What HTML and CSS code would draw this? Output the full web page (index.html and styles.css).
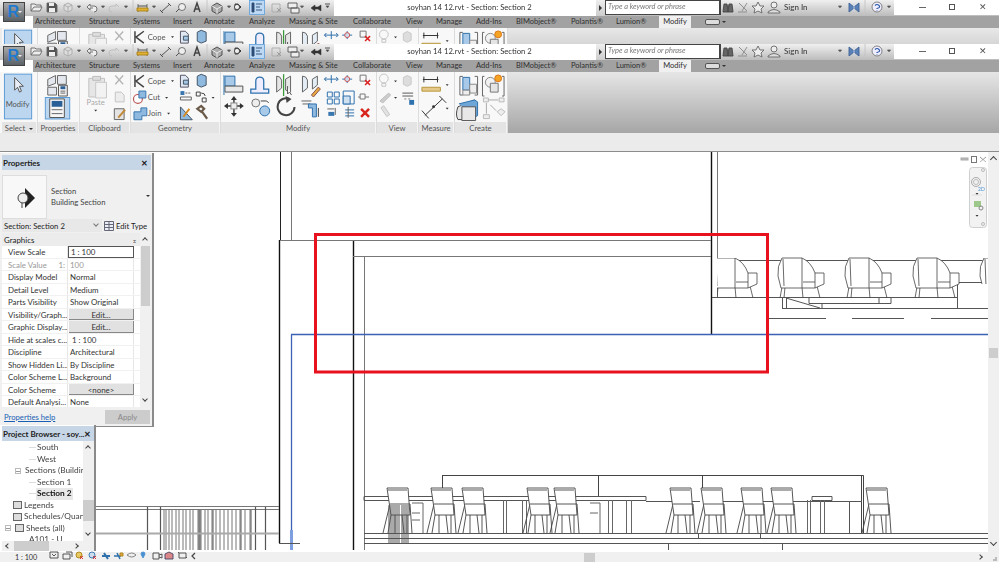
FILE: index.html
```html
<!DOCTYPE html>
<html lang="en">
<head>
<meta charset="utf-8">
<title>soyhan 14 12.rvt - Section: Section 2</title>
<link rel="stylesheet" href="styles.css">
</head>
<body>
<svg class="defs" width="0" height="0" aria-hidden="true">
<defs>
  <g id="caret"><path d="M-1.5 0h3L0 1.8z" fill="#333"/></g>
  <g id="qat" fill="none" stroke="#666" stroke-width=".9">
    <path d="M31 11V4h4l1 1h5v2M31 11l3-4h8l-2 4z" fill="#ededed"/>
    <path d="M47 3h8l2 2v7H47z" fill="#555"/><path d="M49 3h5v3h-5zM49 8h6v4h-6z" fill="#eee" stroke="none"/>
    <path d="M64 5l4-2 4 2v5l-4 2-4-2z" fill="#ddd" stroke="#aaa"/><path d="M68 7v5M64 5l4 2 4-2" stroke="#aaa"/>
    <use href="#caret" x="79" y="6"/>
    <path d="M87 7l3-3v2h4q3 0 3 3t-3 3M87 7l3 3V8h3" fill="#eee"/>
    <use href="#caret" x="103" y="6"/>
    <path d="M119 7l-3-3v2h-4q-3 0-3 3t3 3" stroke="#bbb"/>
    <use href="#caret" x="126" y="6"/>
    <path d="M133 0v15M207 0v15M264 0v15" stroke="#c4c4c4"/>
    <path d="M138 4v8M147 4v8"/><path d="M137 8h11v3h-11z" fill="#e0b030" stroke="#a98218"/><path d="M138 6h9" stroke="#444"/>
    <use href="#caret" x="154" y="6"/>
    <path d="M161 12l9-8M160 10l3 3M168 3l3 3" stroke="#444"/>
    <circle cx="182" cy="7" r="3.500" fill="#eee"/><path d="M176 12l3-3" stroke="#444"/>
    <path d="M194 12l3-9 3 9M195 9h4" stroke="#444" stroke-width="1.500"/>
    <path d="M212 6l5-3 5 3v5l-5 3-5-3z" fill="#aaa" stroke="#444"/><path d="M212 6l5 3 5-3M217 9v5" stroke="#eee"/>
    <use href="#caret" x="229" y="6"/>
    <path d="M235 4h3l3 3-3 3h-3z" fill="#333" stroke="#333"/><circle cx="237" cy="7" r="2.600" fill="#eee" stroke="#444"/>
    <rect x="249.500" y=".5" width="15" height="14" fill="#bcd8f3" stroke="#6aa5dc"/>
    <path d="M252 3h2v9h-2zM256 4h6M256 7h4M256 10h6" stroke="#2c4c76" fill="#2c4c76"/>
    <path d="M272 4h8v8h-8z" stroke="#aaa"/><path d="M277 8l4 4M281 8l-4 4" stroke="#999"/>
    <path d="M288 3h9v5h-9zM291 8h8v5h-8z" fill="#eee" stroke="#555"/>
    <use href="#caret" x="302" y="6"/>
    <path d="M311 8l4-3v2h3l3-2v6l-3-2h-3v2z" fill="#333" stroke="#333" stroke-width=".5"/>
    <path d="M325 4h5" stroke="#444"/><use href="#caret" x="327.500" y="6"/>
  </g>
  <g id="qat-right" fill="none" stroke="#666" stroke-width=".9">
    <path d="M723 4h3l1 8h-5zM728 4h3l1 8h-5zM726 6h2" fill="#666" stroke="#444"/>
    <path d="M738 3l8 8M746 3l-5 8M737 12h9" stroke="#888"/>
    <path d="M757 2l2 4h4l-3 3 1 4-4-2-4 2 1-4-3-3h4z" fill="#eee"/>
    <circle cx="773" cy="5" r="3" fill="#eee"/><path d="M767 12q6-5 12 0v1h-12z" fill="#ddd"/>
    <use href="#caret" x="839" y="6"/>
    <path d="M848 3l5 4 5-4v9l-5-4-5 4z" fill="#5a80b8" stroke="#3d6296"/><path d="M853 3v9" stroke="#c9d6ea"/>
    <path d="M864 0v15" stroke="#c4c4c4"/>
    <circle cx="876" cy="7" r="5" fill="#eef" stroke="#777"/><path d="M874 5.500q2-2 4 0t-2 3v.5M876 10.500v.5" stroke="#2c58a8" stroke-width="1.100"/>
    <use href="#caret" x="888" y="6"/>
  </g>
  <g id="p-select">
    <rect x="4.500" y="1.500" width="28" height="46" fill="#bcd6f0" stroke="#5b9bd5"/>
    <path d="M15 5v13l3-3 2 5 2-1-2-5h4z" fill="#e8eef5" stroke="#555"/>
    <text x="18" y="35" class="t" text-anchor="middle">Modify</text>
  </g>
  <g id="p-props" fill="none">
    <path d="M48 7l8-4v8l-8 3zM58 3h9v9h-9zM48 15h9v8h-9z" fill="#e4e8ee" stroke="#666"/>
    <path d="M59 13h9v11h-9z" fill="#f4f4f4" stroke="#555"/><path d="M61 14h5v3h-5z" fill="#2a5f98"/><path d="M61 19h5M61 21h5" stroke="#666"/>
    <rect x="45.500" y="25.500" width="25" height="22" fill="#bcd6f0" stroke="#5b9bd5"/>
    <path d="M50 27h15v19H50z" fill="#f6f6f6" stroke="#555"/><path d="M52 29h11v6H52z" fill="#2a5f98"/>
    <path d="M52 38h11M52 42h11" stroke="#666"/>
  </g>
  <g id="p-clip" fill="none">
    <path d="M89 6h16v19H89z" fill="#e6e6e6" stroke="#c2c2c2"/><path d="M93 4h8v4h-8z" fill="#ddd" stroke="#bbb"/><path d="M96 10h11v16H96z" fill="#f2f2f2" stroke="#c8c8c8"/>
    <text x="96" y="33" class="t dim" text-anchor="middle">Paste</text>
    <use href="#caret" x="96" y="38"/>
    <path d="M116 3l8 9M124 3l-8 9" stroke="#b5b5b5" stroke-width="1.400"/>
    <path d="M116 20h6l3 3v7h-9z" fill="#ededed" stroke="#c4c4c4"/>
    <path d="M115 37h10v11h-10z" fill="#e3e3e3" stroke="#666"/><path d="M119 46l7-8" stroke="#c28a3a" stroke-width="2"/>
  </g>
  <g id="p-geom" fill="none">
    <path d="M135 3v12M136 9l8-6M136 9l8 6" stroke="#444" stroke-width="1.500"/>
    <text x="148" y="12" class="t">Cope</text><use href="#caret" x="173" y="8"/>
    <path d="M181 3h5l3 3v9h-8z" fill="#dfe8f2" stroke="#556"/><path d="M184 8h5v4h-5z" fill="#a4c7e6" stroke="#456"/>
    <path d="M198 4l4-2 5 2v9l-5 2-4-2z" fill="#8fb9df" stroke="#456"/>
    <circle cx="138" cy="27" r="4.500" fill="#fff" stroke="#b55" stroke-width="1.200"/><path d="M139 19h7v7h-7z" fill="#8fb9df" stroke="#3a77b0"/>
    <text x="148" y="28" class="t">Cut</text><use href="#caret" x="167" y="25"/>
    <path d="M181 19h4v4h-4z" fill="#3a77b0"/><path d="M181 25h11v3h-11z" stroke="#666"/><path d="M186 21h6" stroke="#666" stroke-dasharray="2 1"/>
    <path d="M197 20h4v4h-4zM203 26h4v4h-4z" stroke="#444"/><path d="M202 21q4 0 4 3" stroke="#444"/><use href="#caret" x="214" y="25"/>
    <path d="M134 40h7v-4h6v8h-5v4h-8z" fill="#8fb9df" stroke="#3a77b0"/>
    <text x="148" y="44" class="t">Join</text><use href="#caret" x="169" y="41"/>
    <path d="M181 35v13h12z" fill="#8fb9df" stroke="#456"/><path d="M184 45l6-8" stroke="#d88a20" stroke-width="2"/>
    <path d="M198 37l4-3 3 3-3 3zM203 40l5 7" stroke="#6a5a4a" stroke-width="2.200"/>
  </g>
  <g id="p-modify" fill="none">
    <path d="M225 4h10v10h-10z" fill="#a8cae8" stroke="#2f72ad"/><path d="M225 14h18v6h-18z" fill="#e8e8e8" stroke="#555"/><path d="M224 3v20" stroke="#2f72ad"/>
    <path d="M251 17h5v-8q0-4 4-4t4 4v8h5v4h-18z" fill="#eef" stroke="#2f72ad" stroke-width="1.300"/>
    <path d="M277 4q4 0 5 4v8l-5 4zM291 4l-5 3v11l5 2z" fill="#e6e6e6" stroke="#666"/><path d="M284 2v22" stroke="#3a9a3a" stroke-width="1.300"/><path d="M288 14v8l2-2 2 3" fill="#fff" stroke="#555"/>
    <path d="M303 4q4 0 5 4v8l-5 4zM318 4l-5 3v10l5-4z" fill="#e4edf6" stroke="#666"/><path d="M312 23l7-8 2 2-7 8z" fill="#e8a840" stroke="#855"/>
    <path d="M327 7h10M332 3v8" stroke="#2f72ad"/><path d="M327 5l-2 2 2 2M337 5l2 2-2 2" fill="#79b" stroke="#2f72ad"/>
    <path d="M343 7h10M348 3v8" stroke="#2f72ad"/><circle cx="348" cy="7" r="2.500" fill="#cde" stroke="#c55"/>
    <path d="M361 3h6v6h-6z" stroke="#777"/><path d="M366 8l5 5M371 8l-5 5" stroke="#d22" stroke-width="1.500"/>
    <path d="M328 20h5v5h-5zM335 20h5v5h-5zM328 27h5v5h-5zM335 27h5v5h-5z" stroke="#2f72ad"/>
    <path d="M344 19h11v13h-11z" stroke="#2f72ad"/><path d="M344 24h7v8h-7z" fill="#cfe0f0" stroke="#2f72ad"/>
    <path d="M361 22h5v5h-5zM366 25h4M361 25h-2" stroke="#777"/>
    <path d="M329 40h6v4h-6z" fill="#3a77b0"/><path d="M328 37h7M336 36v7" stroke="#666"/>
    <path d="M346 38h9M346 41h9M346 44h9" stroke="#2f72ad"/><path d="M349 35v11" stroke="#666"/>
    <path d="M362 37l8 8M370 37l-8 8" stroke="#d8261e" stroke-width="2.500"/>
    <path d="M234 26v16M226 34h16" stroke="#333" stroke-width="1.400"/>
    <path d="M234 24l-3 4h6zM234 45l-3-4h6zM224 34l4-3v6zM244 34l-4-3v6z" fill="#333"/><rect x="231" y="31" width="6" height="6" fill="#eee" stroke="#888"/>
    <circle cx="256" cy="31" r="4" fill="#eee" stroke="#777"/><circle cx="265" cy="39" r="5" fill="#a8cae8" stroke="#2f72ad"/><path d="M261 29h6l2 2" stroke="#444"/>
    <path d="M295 35a8.500 8.500 0 1 1-5-8" stroke="#444" stroke-width="2"/><path d="M286 24l6 3-5 4z" fill="#444"/>
    <path d="M302 29h10M303 32h8" stroke="#666"/><path d="M309 32h8v13h-4v-9h-4z" fill="#8fb9df" stroke="#2f72ad"/><path d="M319 36v9" stroke="#444"/>
  </g>
  <g id="p-view" fill="none">
    <circle cx="384" cy="6" r="4.500" stroke="#c4c4c4"/><path d="M382 11h4v3h-4z" stroke="#c4c4c4"/><use href="#caret" x="396" y="8"/>
    <path d="M404 5l4-2 4 2v7l-4 2-4-2z" fill="#ddd" stroke="#c8c8c8"/>
    <path d="M380 29l9-8 2 2-8 8z" fill="#ccc" stroke="#bbb"/><use href="#caret" x="396" y="25"/>
    <path d="M403 21h11M403 24h11" stroke="#555"/><path d="M405 27h2M409 27h2" stroke="#777"/><path d="M410 28h5v5h-5z" fill="#2f72ad"/>
    <path d="M381 36l6 9 3-2-6-9z" fill="#e2e2e2" stroke="#c4c4c4"/>
  </g>
  <g id="p-measure" fill="none">
    <path d="M423 7h16M424 4v6M438 4v6" stroke="#333"/><path d="M422 15h19v4h-19z" fill="#e6c98a" stroke="#b8963c"/>
    <use href="#caret" x="448" y="12"/>
    <path d="M425 44l18-17M422 39l7 8M440 24l7 7" stroke="#333"/><circle cx="434" cy="35" r="1.500" fill="#333"/>
    <use href="#caret" x="448" y="36"/>
  </g>
  <g id="p-create" fill="none">
    <path d="M460 4h3M460 4v19h3M478 4h-3M478 4v19h-3" stroke="#666"/>
    <path d="M463 5h7v13h-7z" fill="#a8cae8" stroke="#2f72ad"/><path d="M470 12h7v9h-7zM463 18h7v5h-7z" fill="#eee" stroke="#888"/>
    <path d="M485 4h-2v20h2M503 4h2v20h-2" stroke="#666"/>
    <circle cx="491" cy="10" r="5" fill="#f2f2f2" stroke="#888"/><path d="M491 11h8v9h-8z" fill="#e4e4e4" stroke="#777"/><circle cx="499" cy="6" r="3.500" fill="#f4a422" stroke="#d8761a"/>
    <path d="M458 35l17-7v14l-5 6h-12q-3-5 0-13z" fill="#e6e6e6" stroke="#444"/>
    <path d="M459 32l16-4 3 2v14l-4 2" fill="#6fa6d8" stroke="#2f72ad"/><path d="M462 35h14v14h-14z" fill="#e8e8e8" stroke="#555"/>
    <path d="M484 26h5v4h-5zM500 26h5v4h-5zM484 43h6v4h-6zM498 40l4-3 4 3-4 4z" stroke="#bbb" fill="#eee"/><path d="M489 28h10M487 31v11M491 33l6 6" stroke="#aaa"/>
  </g>
  <g id="dining" fill="#fff" stroke="#444" stroke-width=".9">
    <path d="M7 16L0 45M27 16l2 29M8 27L5 45M19 27l2 18M12 27v18M24 27v18" fill="none"/>
    <path d="M4 0h21l2 27H8z"/><path d="M5 2h19M7 16h20" fill="none"/>
  </g>
  <g id="lounge" fill="#fff" stroke="#444" stroke-width=".8">
    <path d="M5 29l-2 11M8 29l-1 11M25 29l1 11M40 28l3 12" fill="none"/>
    <path d="M5 0h20q9 4 13 15h9v11l-9 4H4L1 18Q0 8 5 0z"/>
    <path d="M6 1l1 27M25 0v30M26 24h12M38 15v15" fill="none"/>
  </g>
</defs>
</svg>

<div class="window">
  <div class="qat">
    <div class="rbtn"><span class="r">R</span><span class="rcaret"></span></div>
    <svg class="qat-icons" viewBox="27 0 305 15"><use href="#qat"/></svg>
    <div class="title">soyhan 14 12.rvt - Section: Section 2</div>
    <div class="search-btn"></div>
    <div class="search">Type a keyword or phrase</div>
    <div class="info">
      <svg class="info-icons" viewBox="720 0 173 15"><use href="#qat-right"/></svg>
      <span class="signin">Sign In</span>
    </div>
    <div class="winctl"><span class="min"></span><span class="max"></span><span class="close">✕</span></div>
  </div>
  <nav class="tabs">
    <span class="tab w54">Architecture</span><span class="tab w44">Structure</span><span class="tab w40">Systems</span><span class="tab w31">Insert</span><span class="tab w45">Annotate</span><span class="tab w40">Analyze</span><span class="tab w64">Massing &amp; Site</span><span class="tab w53">Collaborate</span><span class="tab w30">View</span><span class="tab w40">Manage</span><span class="tab w40">Add-Ins</span><span class="tab w55">BIMobject®</span><span class="tab w45">Polantis®</span><span class="tab w44">Lumion®</span><span class="tab on">Modify</span>
    <span class="tab-ext"></span><i class="ext-caret"></i>
  </nav>
  <div class="ribbon clip">
    <div class="panel wsel"><svg viewBox="2 0 36 50"><use href="#p-select"/></svg></div>
    <div class="panel wpro"><svg viewBox="38 0 42 50"><use href="#p-props"/></svg></div>
    <div class="panel wcli"><svg viewBox="80 0 51 50"><use href="#p-clip"/></svg></div>
    <div class="panel wgeo"><svg viewBox="131 0 90 50"><use href="#p-geom"/></svg></div>
    <div class="panel wmod"><svg viewBox="221 0 156 50"><use href="#p-modify"/></svg></div>
    <div class="panel wvie"><svg viewBox="377 0 42 50"><use href="#p-view"/></svg></div>
    <div class="panel wmea"><svg viewBox="419 0 36 50"><use href="#p-measure"/></svg></div>
    <div class="panel wcre"><svg viewBox="455 0 53 50"><use href="#p-create"/></svg></div>
    <div class="ribbon-fill"></div>
  </div>
</div>

<div class="window">
  <div class="qat">
    <div class="rbtn"><span class="r">R</span><span class="rcaret"></span></div>
    <svg class="qat-icons" viewBox="27 0 305 15"><use href="#qat"/></svg>
    <div class="title">soyhan 14 12.rvt - Section: Section 2</div>
    <div class="search-btn"></div>
    <div class="search">Type a keyword or phrase</div>
    <div class="info">
      <svg class="info-icons" viewBox="720 0 173 15"><use href="#qat-right"/></svg>
      <span class="signin">Sign In</span>
    </div>
    <div class="winctl"><span class="min"></span><span class="max"></span><span class="close">✕</span></div>
  </div>
  <nav class="tabs">
    <span class="tab w54">Architecture</span><span class="tab w44">Structure</span><span class="tab w40">Systems</span><span class="tab w31">Insert</span><span class="tab w45">Annotate</span><span class="tab w40">Analyze</span><span class="tab w64">Massing &amp; Site</span><span class="tab w53">Collaborate</span><span class="tab w30">View</span><span class="tab w40">Manage</span><span class="tab w40">Add-Ins</span><span class="tab w55">BIMobject®</span><span class="tab w45">Polantis®</span><span class="tab w44">Lumion®</span><span class="tab on">Modify</span>
    <span class="tab-ext"></span><i class="ext-caret"></i>
  </nav>
  <div class="ribbon">
    <div class="panel wsel"><svg viewBox="2 0 36 50"><use href="#p-select"/></svg><div class="plabel">Select <i class="dd"></i></div></div>
    <div class="panel wpro"><svg viewBox="38 0 42 50"><use href="#p-props"/></svg><div class="plabel">Properties</div></div>
    <div class="panel wcli"><svg viewBox="80 0 51 50"><use href="#p-clip"/></svg><div class="plabel">Clipboard</div></div>
    <div class="panel wgeo"><svg viewBox="131 0 90 50"><use href="#p-geom"/></svg><div class="plabel">Geometry</div></div>
    <div class="panel wmod"><svg viewBox="221 0 156 50"><use href="#p-modify"/></svg><div class="plabel">Modify</div></div>
    <div class="panel wvie"><svg viewBox="377 0 42 50"><use href="#p-view"/></svg><div class="plabel">View</div></div>
    <div class="panel wmea"><svg viewBox="419 0 36 50"><use href="#p-measure"/></svg><div class="plabel">Measure</div></div>
    <div class="panel wcre"><svg viewBox="455 0 53 50"><use href="#p-create"/></svg><div class="plabel">Create</div></div>
    <div class="ribbon-fill"></div>
  </div>
</div>
<div class="options-bar"></div>

<main class="workspace">
  <div class="view-row">
    <svg class="drawing" viewBox="0 152 988 398">
      <g fill="none" stroke="#555" stroke-width="1">
        <path d="M280.500 152V240" stroke="#222"/>
        <path d="M291.500 152V240M717.500 152V298" stroke="#777"/>
        <path d="M711.500 152V334M353.500 240V550M279.500 240V543" stroke="#111" stroke-width="1.400"/>
        <path d="M280 240.500H711M353 256.500H711" stroke="#777"/>
        <path d="M364.500 256V550" stroke="#777"/>
        <path d="M291.500 334.500V550M291 334.500H988" stroke="#3b62b5" stroke-width="1.300"/>
        <path d="M291.500 530V550" stroke="#7d9fe0" stroke-width="3"/>
        <path d="M279 543.500H300"/>
        <path d="M96 506.500H279M96 509.500H279" stroke="#777"/>
        <path d="M147.500 507V550M160.500 507V550M265.500 507V550M255.500 507V550" stroke="#555" stroke-width="1.200"/>
        <path d="M164 510V550M166 510V550M169 510V550M172 510V550M176 510V550M179 510V550M183 510V550M186 510V550M190 510V550M193 510V550M198 510V550M201 510V550M205 510V550M208 510V550M212 510V550M216 510V550M220 510V550M224 510V550M228 510V550M232 510V550M236 510V550M240 510V550M245 510V550M250 510V550" stroke="#777"/>
        <path d="M199 510V550M200 510V550M213 510V550M241 510V550M251 510V550" stroke="#555"/>
        <path d="M96 533.500H279" stroke="#aaa" stroke-width="2"/>
        <path d="M364 533.500H988M364 538.500H988M364 543.500H988" stroke="#555"/>
        <path d="M668.500 543V550M698.500 533V538M760.500 533V538M782.500 543V550"/>
        <path d="M442.500 475.500H863.500V533M861.500 475.500V533M442.500 475V496M598.500 475V496M702.500 475V496" stroke="#444"/>
        <path d="M364 496.500H646V500.500H364zM646 501.500H700M812 496.500H832V500.500H812zM720 501.500H862M849.500 501V533" stroke="#555"/>
        <path d="M503.500 500V533M506.500 500V533M522.500 500V533M526.500 500V533M608.500 500V533M612.500 500V533M626.500 500V533M631.500 500V533M807.500 500V533M810.500 500V533M820.500 500V533M824.500 500V533M412 503H423V533M412 513H420M412 520H420M590 503H600V533M590 513H598" stroke="#666"/>
      </g>
      <use href="#dining" x="383" y="488"/><use href="#dining" x="427" y="488"/><use href="#dining" x="458" y="488"/><use href="#dining" x="523" y="488"/><use href="#dining" x="550" y="488"/>
      <use href="#dining" x="666" y="488"/><use href="#dining" x="697" y="488"/><use href="#dining" x="737" y="488"/><use href="#dining" x="767" y="488"/><use href="#dining" x="862" y="488"/>
      <path d="M389 505V543M391 505V543M393 505V543M395 505V543M397 505V543M399 505V543M402 505V543M404 505V543M406 505V543M408 505V543" stroke="#555" fill="none"/>
      <g fill="none" stroke="#555">
        <path d="M717 260.500H988M712 297.500H957M782 308.500H988M957.500 282V308M957 282.500H988"/>
        <path d="M782.500 298V308M786.500 298V308M786 298L820 308M809 298V303.500H891V298M822 303V308M879 298V303"/>
        <path d="M766 318.500H826M852 318.500H904M931 318.500H988"/>
      </g>
      <svg x="717" y="258" width="45" height="42" viewBox="7 0 45 42"><use href="#lounge"/></svg>
      <use href="#lounge" x="777" y="258"/><use href="#lounge" x="844" y="258"/><use href="#lounge" x="912" y="258"/>
      <svg x="979" y="258" width="9" height="26"><use href="#lounge"/></svg>
      <path d="M315 234.500H767.500V372H315.500V233" fill="none" stroke="#e8121f" stroke-width="3"/>
      <g fill="none" stroke="#777">
        <rect x="961" y="158" width="7" height="2" fill="#bbb" stroke="#aaa"/>
        <rect x="971.500" y="156.500" width="5" height="6"/>
        <path d="M980 157l6 5M986 157l-6 5" stroke-dasharray="1 .5"/>
      </g>
      <rect x="969.500" y="167.500" width="17" height="60" rx="3" fill="#f2f2f2" stroke="#cfcfcf"/>
      <g fill="none">
        <circle cx="976" cy="182" r="4.500" stroke="#aaa"/><circle cx="976" cy="182" r="2.500" stroke="#bbb"/>
        <text x="978" y="191" class="tiny">2D</text>
        <path d="M972 195h10" stroke="#ddd"/><circle cx="983" cy="170" r="1.500" stroke="#bbb"/><circle cx="983" cy="224" r="1.500" stroke="#bbb"/>
        <rect x="974" y="201" width="7" height="6" fill="#9dc88a"/><circle cx="981" cy="208" r="2" stroke="#888"/>
        <use href="#caret" x="977" y="193"/><use href="#caret" x="977" y="215"/>
      </g>
    </svg>
    <div class="vscroll">
      <span class="up"></span>
      <span class="vthumb"></span>
      <span class="down"></span>
    </div>
  </div>

  <div class="statusbar">
    <span class="scale">1 : 100</span>
    <svg class="status-icons" viewBox="48 0 150 12">
      <g fill="none" stroke="#444" stroke-width=".9">
        <path d="M50 2h8v6h-8zM52 4l2 2 2-2"/><path d="M63 4h7v5h-7zM66 2h6v5"/>
        <circle cx="79" cy="5" r="3" fill="#e8c860" stroke="#a98218"/><path d="M80 6l3 3M83 6l-3 3" stroke="#d22"/>
        <circle cx="92" cy="5" r="3" fill="#cde" stroke="#2f72ad"/><path d="M93 6l3 3M96 6l-3 3" stroke="#d22"/>
        <path d="M102 6h8M104 3l4 6" stroke="#2f72ad" stroke-width="2"/>
        <path d="M114 6h7M117 3l3 6" stroke="#2f72ad" stroke-width="1.500"/><path d="M120 3h3v3h-3z" fill="#e8a840" stroke="#a98218"/>
        <path d="M127 5q5-4 9 0-4 4-9 0z" stroke="#777"/>
        <path d="M143 2a2 2 0 0 1 2 2l-2 4-2-4a2 2 0 0 1 2-2z" fill="#4a90d0" stroke="#4a90d0"/>
        <path d="M153 3h6v6h-6zM159 5l3-1v4l-3-1"/><path d="M165 8v-4l4-2 4 2v5h-8z" fill="#d88" stroke="#446"/>
        <path d="M179 3h7v5h-7zM178 2l1 1M187 8l-1-1"/><path d="M195 3l-3 3 3 3" stroke-width="1.200"/>
      </g>
    </svg>
    <div class="hscroll"><span class="hthumb"></span></div>
    <i class="sright"></i><span class="grip"></span>
  </div>

  <aside class="palette props">
    <header class="ptitle">Properties<span>✕</span></header>
    <div class="typesel">
      <div class="thumb"><svg viewBox="0 0 44 44" width="44" height="44"><path d="M22 12l10 10-10 10z" fill="#222"/><circle cx="20" cy="22" r="5" fill="#eee" stroke="#444"/><path d="M19 27v5" stroke="#444"/></svg></div>
      <div class="tname"><div>Section</div><div>Building Section</div></div>
      <i class="caret-d"></i>
    </div>
    <div class="combo-row"><div class="combo">Section: Section 2<i class="chev"></i></div><div class="edit"><svg width="10" height="10" viewBox="0 0 10 10"><path d="M.5.500h9v9h-9zM.5 3.500h9M.5 6.500h9M5 .5v9" fill="#e8eef5" stroke="#667"/></svg> Edit Type</div></div>
    <div class="grid-wrap">
      <div class="pgrid">
        <div class="group">Graphics<b>⌅</b></div>
        <div class="row"><span>View Scale</span><span class="boxed">1 : 100</span></div>
        <div class="row dim"><span class="sv">Scale Value<em>1:</em></span><span>100</span></div>
        <div class="row"><span>Display Model</span><span>Normal</span></div>
        <div class="row"><span>Detail Level</span><span>Medium</span></div>
        <div class="row"><span>Parts Visibility</span><span>Show Original</span></div>
        <div class="row"><span>Visibility/Graph...</span><span class="btn">Edit...</span></div>
        <div class="row"><span>Graphic Display...</span><span class="btn">Edit...</span></div>
        <div class="row"><span>Hide at scales c...</span><span>&nbsp;1 : 100</span></div>
        <div class="row"><span>Discipline</span><span>Architectural</span></div>
        <div class="row"><span>Show Hidden Li...</span><span>By Discipline</span></div>
        <div class="row"><span>Color Scheme L...</span><span>Background</span></div>
        <div class="row"><span>Color Scheme</span><span class="btn">&lt;none&gt;</span></div>
        <div class="row"><span>Default Analysi...</span><span>None</span></div>
      </div>
      <div class="pscroll"><i class="pup"></i><span></span><i class="pdown"></i></div>
    </div>
    <div class="pfoot"><a>Properties help</a><span class="apply">Apply</span></div>
  </aside>

  <aside class="palette browser">
    <header class="ptitle brt">Project Browser - soy...<span>✕</span></header>
    <div class="tree-wrap">
      <ul class="tree">
        <li class="l3">South</li>
        <li class="l3">West</li>
        <li class="l2"><i class="box"></i>Sections (Buildin</li>
        <li class="l3">Section 1</li>
        <li class="l3"><b>Section 2</b></li>
        <li class="l1"><i class="ic"></i>Legends</li>
        <li class="l1"><i class="ic"></i>Schedules/Quan</li>
        <li class="l0"><i class="box"></i><i class="ic"></i>Sheets (all)</li>
        <li class="l4">A101 - U</li>
      </ul>
      <div class="bscroll"><i class="pup"></i><span></span><i class="pdown"></i></div>
    </div>
    <div class="bhscroll"><i class="pl"></i><span></span><i class="pr"></i></div>
  </aside>
</main>
</body>
</html>
```

FILE: styles.css
```css
* { box-sizing: border-box; }
html, body { margin: 0; padding: 0; }
body {
  width: 999px; height: 562px; overflow: hidden; background: #fff;
  font-family: Lato, "Open Sans", sans-serif; font-size: 7.7px; color: #333;
  filter: blur(.35px);
}
.defs { position: absolute; }
svg { display: block; }
.t { font-family: Lato, sans-serif; font-size: 7.8px; fill: #555; }
.t.dim { fill: #aaa; }
.tiny { font-family: Lato, sans-serif; font-size: 5px; fill: #4a90d0; }

.qat { display: flex; height: 16px; background: linear-gradient(#f0f0f0, #bcbcbc); }
.rbtn { width: 27px; height: 22px; margin: 1px 0 -7px 0; padding: 0 2px; position: relative; display: flex; align-items: center; justify-content: center; z-index: 2; }
.r { width: 22px; height: 20px; background: linear-gradient(#a8a8a8, #5a6268); border: 1px solid #444; color: #1f7ad0; font: bold 16px/18px "Liberation Sans", sans-serif; padding-left: 4px; }
.rcaret { position: absolute; right: 5px; top: 10px; border: 2px solid transparent; border-top-color: #eee; }
.qat-icons { width: 305px; height: 15px; flex: none; }
.title { width: 262px; margin-left: 2px; background: #fff; text-align: center; font-size: 7.7px; line-height: 15px; color: #333; padding-left: 9px; }
.search-btn { width: 9px; background: linear-gradient(#eee, #ccc); position: relative; }
.search-btn::after { content: ""; position: absolute; left: 3px; top: 5px; border: 3px solid transparent; border-left-color: #333; border-right: 0; }
.search { width: 116px; border: 1px solid #444; border-width: 1px 2px 1px 1px; background: #fff; font-style: italic; font-size: 7.4px; color: #777; line-height: 12px; padding-left: 2px; height: 15px; }
.info { width: 173px; position: relative; flex: none; }
.info-icons { width: 173px; height: 15px; }
.signin { position: absolute; left: 63px; top: 0; line-height: 15px; font-size: 8px; }
.winctl { flex: 1; background: #fff; height: 15px; position: relative; }
.winctl .min { position: absolute; left: 25px; top: 7px; width: 7px; height: 1px; background: #666; }
.winctl .max { position: absolute; left: 55px; top: 4px; width: 6px; height: 6px; border: 1px solid #555; }
.winctl .close { position: absolute; left: 85px; top: 0; font-size: 9px; line-height: 14px; color: #555; }

.tabs { display: flex; height: 12px; background: #a2a2a2; margin-left: 33px; line-height: 12px; padding-left: 2px; color: #2f2f2f; position: relative; font-size: 7.5px; }
.tab { flex: none; white-space: nowrap; }
.w54 { width: 54px; } .w44 { width: 44px; } .w40 { width: 40px; } .w31 { width: 31px; }
.w45 { width: 45px; } .w64 { width: 64px; } .w53 { width: 53px; } .w30 { width: 30px; } .w55 { width: 55px; }
.tab.on { width: 32px; margin-left: -1px; background: #f0f0f0; text-align: center; }
.tab-ext { width: 15px; height: 6px; margin: 3px 0 0 14px; border: 1px solid #555; border-radius: 2px; background: #ddd; }
.ext-caret { margin: 5px 0 0 2px; width: 0; height: 0; border: 2px solid transparent; border-top-color: #333; }

.ribbon { display: flex; height: 61px; background: #f6f6f6; padding-left: 2px; }
.ribbon.clip { height: 16px; overflow: hidden; background: #ececec; }
.clip .ribbon-fill { background: linear-gradient(#e8e8e8, #d6d6d6); }
.panel { flex: none; display: flex; flex-direction: column; background: #f8f8f8; border-right: 1px solid #dcdcdc; }
.panel svg { height: 50px; width: 100%; flex: none; }
.wsel { width: 36px; } .wpro { width: 42px; } .wcli { width: 51px; } .wgeo { width: 90px; }
.wmod { width: 156px; } .wvie { width: 42px; } .wmea { width: 36px; } .wcre { width: 53px; }
.plabel { height: 11px; background: #e4e4e4; text-align: center; line-height: 12px; color: #555; border-right: 1px solid #f4f4f4; }
.dd { display: inline-block; border: 2.500px solid transparent; border-top-color: #333; border-bottom: 0; margin: 0 0 1px 2px; }
.ribbon-fill { flex: 1; background: linear-gradient(#e6e6e6, #a6a6a6); }
.options-bar { height: 19px; background: #ebebeb; border-bottom: 1px solid #8c8c8c; }

.workspace { position: relative; height: 410px; }
.view-row { display: flex; height: 400px; }
.drawing { width: 988px; height: 398px; flex: none; }
.vscroll { flex: 1; height: 401px; background: #f0f0f0; position: relative; }
.vthumb { position: absolute; top: 196px; left: 1px; width: 9px; height: 10px; background: #cdcdcd; }
.up, .down { position: absolute; left: 3px; width: 5px; height: 5px; border: solid #444; border-width: 1px 0 0 1px; }
.up { top: 5px; transform: rotate(45deg); }
.down { top: 388px; transform: rotate(225deg); }

.statusbar { position: absolute; left: 0; right: 0; top: 400px; height: 10px; background: #f0f0f0; display: flex; align-items: center; }
.scale { width: 48px; padding-left: 15px; flex: none; font-size: 7.2px; }
.status-icons { width: 150px; height: 12px; flex: none; margin-top: -2px; }
.hscroll { flex: 1; position: relative; height: 100%; margin-top: 1px; }
.hthumb { position: absolute; left: 386px; top: 0; width: 11px; height: 10px; background: #cdcdcd; }
.sright { width: 4px; height: 4px; margin-right: 9px; flex: none; border: solid #444; border-width: 1px 1px 0 0; transform: rotate(45deg); }
.grip { width: 4px; height: 4px; margin: 3px 2px 0; border-right: 2px dotted #bbb; border-bottom: 2px dotted #bbb; }

.palette { position: absolute; background: #f0f0f0; display: flex; flex-direction: column; }
.props { left: 0; top: 1px; width: 154px; height: 274px; border: solid #8a8a8a; border-width: 0 2px 1px 0; padding: 2px 1px 0 2px; }
.ptitle { height: 15px; flex: none; background: #c7d6e6; font-weight: 700; font-size: 8px; line-height: 17px; padding: 0 3px 0 1px; color: #222; display: flex; justify-content: space-between; white-space: nowrap; }
.ptitle span { font-size: 8px; }
.typesel { height: 45px; flex: none; display: flex; align-items: center; margin-top: 4px; position: relative; }
.thumb { width: 45px; height: 44px; background: #f8f8f8; border: 1px solid #ddd; flex: none; }
.tname { margin-left: 4px; line-height: 11px; color: #444; }
.caret-d { position: absolute; right: 1px; top: 21px; border: 2.500px solid transparent; border-top-color: #333; border-bottom: 0; }
.combo-row { display: flex; height: 13px; flex: none; align-items: center; }
.combo { width: 100px; height: 13px; line-height: 15px; background: #e8e8e8; padding-left: 2px; color: #222; position: relative; }
.chev { position: absolute; right: 4px; top: 3px; width: 4px; height: 4px; border: solid #777; border-width: 0 1px 1px 0; transform: rotate(45deg); }
.edit { display: flex; align-items: center; gap: 2px; margin-left: 2px; white-space: nowrap; color: #222; padding-top: 1px; }
.grid-wrap { display: flex; flex: none; height: 174px; margin-top: 1px; overflow: hidden; }
.pgrid { width: 138px; flex: none; background: #fff; font-size: 7.9px; }
.group { height: 13px; background: #ececec; line-height: 15px; padding: 0 3px 0 2px; color: #222; display: flex; justify-content: space-between; }
.group b { font-weight: 400; font-size: 6px; }
.row { display: grid; grid-template-columns: 66px 66px 6px; height: 12.500px; line-height: 12px; border-bottom: 1px solid #f1f1f1; color: #333; }
.row span { overflow: hidden; white-space: nowrap; padding-left: 6px; border-right: 1px solid #e6e6e6; }
.row span + span { padding-left: 2px; }
.row .sv { display: flex; justify-content: space-between; padding-right: 2px; }
.sv em { font-style: normal; }
.row .boxed { border: 1px solid #555; background: #fff; line-height: 10px; }
.row .btn { background: #e1e1e1; border: solid #888; border-width: 0 1px 1px 0; text-align: center; padding: 0; margin-left: 1px; }
.row.dim { color: #999; }
.pscroll { flex: 1; background: #f0f0f0; position: relative; }
.pscroll span { position: absolute; left: 1px; top: 13px; width: 9px; height: 60px; background: #cdcdcd; }
.pup, .pdown, .pl, .pr { position: absolute; width: 4px; height: 4px; border: solid #444; border-width: 1px 0 0 1px; }
.pup { left: 3px; top: 5px; transform: rotate(45deg); }
.pdown { left: 3px; bottom: 6px; transform: rotate(225deg); }
.pfoot { flex: 1; display: flex; align-items: center; justify-content: space-between; padding: 0 1px 0 2px; }
.pfoot a { color: #1a5fb4; text-decoration: underline; }
.apply { width: 45px; height: 14px; background: #ccc; color: #888; text-align: center; line-height: 14px; }

.browser { left: 0; top: 273px; width: 96px; height: 126px; border: solid #8a8a8a; border-width: 0 2px 0 0; padding: 1px 0 0 2px; background: #fff; }
.tree-wrap { flex: 1; display: flex; overflow: hidden; }
.tree { list-style: none; margin: 0; padding: 1px 0 0; width: 81px; flex: none; overflow: hidden; line-height: 11.500px; color: #444; font-size: 8.3px; }
.tree li { white-space: nowrap; height: 11.500px; display: flex; align-items: center; gap: 1px; }
.l0 { padding-left: 3px; } .l1 { padding-left: 11px; } .l2 { padding-left: 13px; } .l3 { padding-left: 35px; position: relative; } .l4 { padding-left: 27px; }
.l3::before { content: ""; position: absolute; left: 27px; top: 5px; width: 7px; border-top: 1px solid #ddd; }
.tree b { background: #e8e8e8; color: #111; padding: 0 1px; margin-left: -1px; }
.box { width: 6px; height: 6px; border: 1px solid #bbb; flex: none; margin-right: 3px; background: linear-gradient(transparent 2px, #999 2px, #999 3px, transparent 3px); }
.ic { width: 9px; height: 8px; background: #ddd; border: 1px solid #666; flex: none; margin-right: 1px; }
.bscroll { flex: 1; background: #f0f0f0; position: relative; }
.bscroll span { position: absolute; left: 0; top: 59px; width: 100%; height: 21px; background: #cdcdcd; }
.bhscroll { height: 10px; flex: none; background: #f0f0f0; position: relative; }
.bhscroll span { position: absolute; left: 12px; top: 0; width: 35px; height: 10px; background: #cdcdcd; }
.pl { left: 4px; top: 3px; transform: rotate(-45deg); }
.pr { right: 16px; top: 3px; transform: rotate(135deg); }
```
